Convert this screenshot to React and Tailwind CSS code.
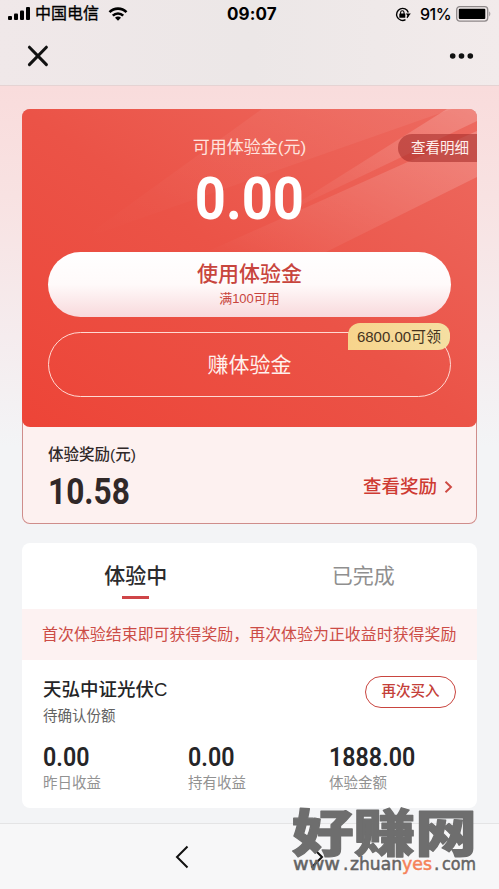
import React from "react";

const stats = [
  { value: "0.00", label: "昨日收益", width: "w-[145px]" },
  { value: "0.00", label: "持有收益", width: "w-[141px]" },
  { value: "1888.00", label: "体验金额", width: "w-[110px]" },
];

const StatusBar = () => (
  <div className="flex h-7 items-center pl-2 pr-[7px] text-black">
    <svg width="23" height="14" viewBox="0 0 23 14">
      <rect x="0" y="9" width="4" height="4" rx="1" />
      <rect x="6" y="6.5" width="4" height="6.5" rx="1" />
      <rect x="12" y="3.5" width="4" height="9.5" rx="1" />
      <rect x="18" y="0" width="4" height="13" rx="1" />
    </svg>
    <span className="ml-1 w-[73px] text-[16px] leading-7 [-webkit-text-stroke:0.3px]">中国电信</span>
    <svg width="20" height="14" viewBox="0 0 20 14" fill="none" stroke="#000" strokeWidth="2.6">
      <path d="M1.5 5.2a12 12 0 0 1 17 0" />
      <path d="M4.8 8.6a7.4 7.4 0 0 1 10.4 0" />
      <path d="M7 10.8a4.2 4.2 0 0 1 6 0L10 13.8z" fill="#000" stroke="none" />
    </svg>
    <span className="ml-[99px] w-[60px] font-[Inter] text-[17px] font-bold leading-7 tracking-[0.1px]">09:07</span>
    <svg className="ml-[108px]" width="16" height="15" viewBox="0 0 16 15" fill="none" stroke="#000" strokeWidth="1.4">
      <path d="M13.3 5.5A6 6 0 1 0 10.5 12.7" />
      <path d="M12 10.7a6 6 0 0 0 1.4-3" />
      <path d="M10.8 6.5h5L13.3 9.7z" fill="#000" stroke="none" />
      <rect x="4.3" y="6.5" width="6" height="4.2" rx="0.5" fill="#000" stroke="none" />
      <path d="M5.6 7V5.4a1.7 1.7 0 0 1 3.4 0V7" strokeWidth="1.1" />
    </svg>
    <span className="ml-[9px] w-[36px] whitespace-nowrap font-[Inter] text-[16px] font-medium leading-7 tracking-[-0.5px]">91%</span>
    <svg width="36" height="16" viewBox="0 0 36 16">
      <rect x="0.7" y="0.7" width="31" height="14.4" rx="3" fill="none" stroke="#8e8889" strokeWidth="1.3" />
      <rect x="2.8" y="2.8" width="26.5" height="10.2" rx="1" />
      <path d="M33.3 5.3q2 2.6 0 5.2z" fill="#8e8889" />
    </svg>
  </div>
);

const Header = () => (
  <div className="h-[86px] border-b border-[#e5d3d3] bg-gradient-to-r from-[#f0e8e9] via-[#ece7e7] to-[#f2ebeb]">
    <StatusBar />
    <div className="flex h-14 items-center justify-between pl-[27px] pr-[25px]">
      <svg width="22" height="22" viewBox="0 0 22 22" fill="none" stroke="#111" strokeWidth="3" strokeLinecap="round">
        <path d="M2.4 2.2l17 17.4M19.4 2.2l-17 17.4" />
      </svg>
      <svg width="25" height="8" viewBox="0 0 25 8" fill="#111">
        <circle cx="3.7" cy="4" r="2.8" />
        <circle cx="12.5" cy="4" r="2.8" />
        <circle cx="21.3" cy="4" r="2.8" />
      </svg>
    </div>
  </div>
);

const BalancePanel = () => (
  <div className="relative h-[318px] overflow-hidden rounded-lg bg-gradient-to-tr from-[#ed4437] via-[#eb5347] to-[#ed6a60] px-[26px]">
    <svg className="absolute left-0 top-0" width="455" height="318" viewBox="0 0 455 318">
      <defs>
        <linearGradient id="ray" x1="1" y1="0" x2="0" y2="1">
          <stop offset="0" stopColor="#fff" stopOpacity="0.2" />
          <stop offset="1" stopColor="#fff" stopOpacity="0" />
        </linearGradient>
      </defs>
      <path d="M455 22L455 68L300 145H180z" fill="url(#ray)" />
      <path d="M425 0h30v12L250 110z" fill="url(#ray)" />
      <path d="M240 0h190L60 130z" fill="url(#ray)" opacity="0.35" />
    </svg>
    <div className="relative">
      <div className="pt-[27px] text-center text-[17px] leading-6 text-[#ffe3df]">可用体验金(元)</div>
      <div className="h-[92px] pt-1 text-center font-[Roboto] text-[59px] font-bold leading-[70px] text-white">
        <span className="inline-block scale-x-[0.92]">0.00</span>
      </div>
      <div className="flex h-[65px] flex-col items-center rounded-full bg-gradient-to-b from-white via-[#fffafa] to-[#f8d9dc] pt-2 text-[#c8453d]">
        <span className="text-[21px] font-medium leading-7">使用体验金</span>
        <span className="mt-px text-[13px] leading-5">满100可用</span>
      </div>
      <div className="mt-[15px] flex h-[65px] items-center justify-center rounded-full border-[1.5px] border-[#ffd9d3] text-[21px] text-[#fff0ed]">
        赚体验金
      </div>
      <div className="absolute left-[300px] top-[214px] h-[27px] w-[102px] whitespace-nowrap rounded-[12px] rounded-bl-none bg-gradient-to-r from-[#f7d48c] to-[#f5dfa2] text-center text-[15px] leading-[27px] text-[#45331e]">
        6800.00可领
      </div>
    </div>
    <div className="absolute right-0 top-[25px] h-7 w-[79px] rounded-l-full bg-[#a92f2b]/60 pl-[13px] text-[14.5px] leading-7 text-[#fff0ed]">
      查看明细
    </div>
  </div>
);

const RewardRow = () => (
  <div className="flex h-[97px] justify-between rounded-b-lg pl-[26px] pr-[23px] text-[#302828]">
    <div className="pt-4">
      <div className="text-[15.5px] font-medium leading-6">体验奖励(元)</div>
      <div className="mt-[5px] font-[Roboto] text-[36px] font-bold leading-10">
        <span className="inline-block origin-left scale-x-[0.88]">10.58</span>
      </div>
    </div>
    <div className="flex h-[34px] items-center pt-0 mt-[43px] text-[#ce3a32]">
      <span className="text-[18.5px] font-medium">查看奖励</span>
      <svg className="ml-1.5" width="11" height="14" viewBox="0 0 11 14" fill="none" stroke="#ce4a43" strokeWidth="1.9">
        <path d="M2.5 1.7L8 7l-5.5 5.3" />
      </svg>
    </div>
  </div>
);

const HoldingsCard = () => (
  <div className="mt-[19px] h-[265px] rounded-lg bg-white">
    <div className="flex h-[66px] text-[21px] leading-[30px]">
      <div className="flex flex-1 flex-col items-center pt-[18px] font-medium text-[#2b2b2d]">
        体验中
        <div className="mt-[5px] h-[2.5px] w-[27px] bg-[#cf4548]" />
      </div>
      <div className="flex-1 pt-[18px] text-center text-[#8f8f8f]">已完成</div>
    </div>
    <div className="h-[51px] whitespace-nowrap bg-[#fdf2f2] pl-5 text-[15.95px] leading-[51px] text-[#cc4c46]">
      首次体验结束即可获得奖励，再次体验为正收益时获得奖励
    </div>
    <div className="flex h-20 justify-between pl-[21px] pr-[21px]">
      <div className="pt-4">
        <div className="text-[18.5px] font-medium leading-7 text-[#252527]">天弘中证光伏C</div>
        <div className="text-[14.5px] leading-6 text-[#626262]">待确认份额</div>
      </div>
      <div className="mt-4 h-8 w-[91px] rounded-full border-[1.5px] border-[#c9453f] text-center text-[14.5px] font-medium leading-[29px] text-[#c43f39]">
        再次买入
      </div>
    </div>
    <div className="flex pl-[21px]">
      {stats.map((s) => (
        <div key={s.label} className={s.width}>
          <div className="pt-1 font-[Roboto] text-[25px] font-semibold leading-[28px] text-[#252527]">
            <span className="inline-block origin-left scale-x-[0.93]">{s.value}</span>
          </div>
          <div className="text-[14.5px] leading-[22px] text-[#929292]">{s.label}</div>
        </div>
      ))}
    </div>
  </div>
);

const Watermark = () => (
  <svg className="absolute left-[289px] top-[803px]" width="195" height="80" viewBox="0 0 195 80">
    <text
      x="3"
      y="49"
      textLength="185"
      lengthAdjust="spacingAndGlyphs"
      fontSize="51"
      fontWeight="900"
      fontFamily="'Noto Sans CJK SC', sans-serif"
      fill="#6e6e6e"
      stroke="#6e6e6e"
      strokeWidth="1.2"
      strokeLinejoin="round"
    >
      好赚网
    </text>
    <g fontFamily="'DejaVu Sans', sans-serif" fontSize="17" fill="#646464" stroke="#646464" strokeWidth="0.5">
      <text x="4" y="67" textLength="47" lengthAdjust="spacingAndGlyphs">www</text>
      <text x="54" y="67">.</text>
      <text x="61" y="67" textLength="52" lengthAdjust="spacingAndGlyphs">zhuan</text>
      <text x="113" y="67" textLength="30" lengthAdjust="spacingAndGlyphs" fill="#f58259" stroke="#f58259">yes</text>
      <text x="145" y="67">.</text>
      <text x="153" y="67" textLength="34" lengthAdjust="spacingAndGlyphs">com</text>
    </g>
  </svg>
);

const App = () => {
  return (
    <div className="relative h-[889px] w-[499px] overflow-hidden bg-[#f3f4f6] font-['Liberation_Sans','Noto_Sans_CJK_SC',sans-serif]">
      <Header />
      <div className="h-[737px] bg-[linear-gradient(to_bottom,#f9dcdc_0px,#f8e2e2_110px,#f5ecee_250px,#f3f4f6_360px)] px-[22px] pt-[23px]">
        <div className="h-[415px] rounded-lg bg-[#fdf1f0] shadow-[inset_0_0_0_1px_#cf8d8b]">
          <BalancePanel />
          <RewardRow />
        </div>
        <HoldingsCard />
      </div>
      {/* browser navigation */}
      <div className="flex h-[66px] justify-between border-t border-[#e4e4e5] bg-[#f7f7f8] pl-[174px] pr-[174px] pt-[21px]">
        <svg width="16" height="24" viewBox="0 0 16 24" fill="none" stroke="#111" strokeWidth="2">
          <path d="M13.5 1.5L3 12l10.5 10.5" />
        </svg>
        <svg width="16" height="24" viewBox="0 0 16 24" fill="none" stroke="#111" strokeWidth="2">
          <path d="M2.5 1.5L13 12 2.5 22.5" />
        </svg>
      </div>
      <Watermark />
    </div>
  );
};

export default App;
